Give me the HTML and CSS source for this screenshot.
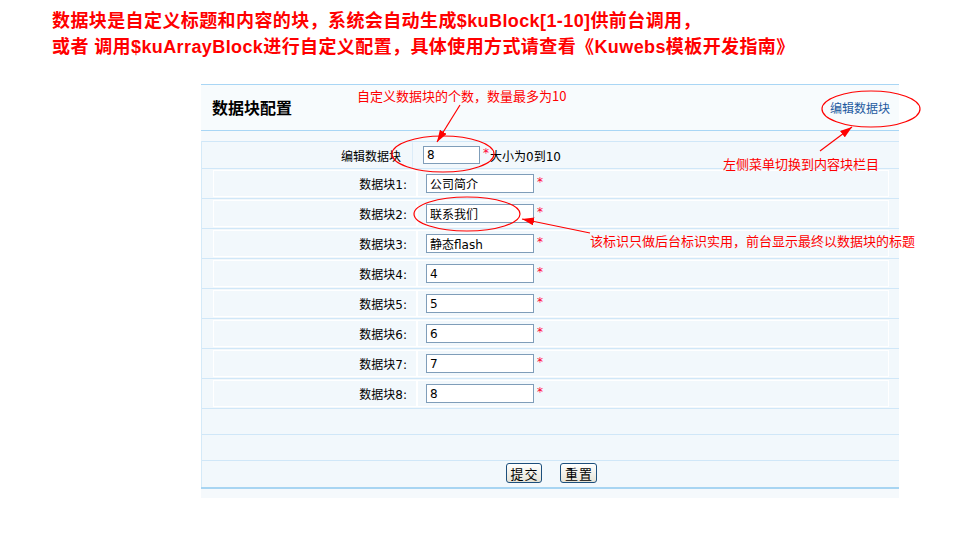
FILE: index.html
```html
<!DOCTYPE html>
<html lang="zh-CN">
<head>
    <meta charset="UTF-8">
    <meta name="viewport" content="width=device-width, initial-scale=1.0">
    <title>数据块配置</title>
    <link rel="stylesheet" href="styles.css">
</head>
<body>
    <div class="intro">
        <p>数据块是自定义标题和内容的块，系统会自动生成$kuBlock[1-10]供前台调用，</p>
        <p>或者 调用$kuArrayBlock进行自定义配置，具体使用方式请查看《Kuwebs模板开发指南》</p>
    </div>

    <form class="panel" onsubmit="return false">
        <div class="panel-head">
            <h2>数据块配置</h2>
            <a href="#" class="head-link">编辑数据块</a>
        </div>
        <div class="panel-gap"></div>

        <div class="panel-body">
            <div class="row row-count">
                <div class="cell label">编辑数据块</div>
                <div class="cell field"><input type="text" class="count" value="8"><span class="req">*</span>大小为0到10</div>
            </div>
            <div class="row">
                <div class="cell label">数据块1:</div>
                <div class="cell field"><input type="text" value="公司简介"><span class="req">*</span></div>
            </div>
            <div class="row">
                <div class="cell label">数据块2:</div>
                <div class="cell field"><input type="text" value="联系我们"><span class="req">*</span></div>
            </div>
            <div class="row">
                <div class="cell label">数据块3:</div>
                <div class="cell field"><input type="text" value="静态flash"><span class="req">*</span></div>
            </div>
            <div class="row">
                <div class="cell label">数据块4:</div>
                <div class="cell field"><input type="text" value="4"><span class="req">*</span></div>
            </div>
            <div class="row">
                <div class="cell label">数据块5:</div>
                <div class="cell field"><input type="text" value="5"><span class="req">*</span></div>
            </div>
            <div class="row">
                <div class="cell label">数据块6:</div>
                <div class="cell field"><input type="text" value="6"><span class="req">*</span></div>
            </div>
            <div class="row">
                <div class="cell label">数据块7:</div>
                <div class="cell field"><input type="text" value="7"><span class="req">*</span></div>
            </div>
            <div class="row">
                <div class="cell label">数据块8:</div>
                <div class="cell field"><input type="text" value="8"><span class="req">*</span></div>
            </div>
            <div class="row blank"></div>
            <div class="row blank"></div>
            <div class="row actions">
                <button type="submit">提交</button>
                <button type="reset" class="reset">重置</button>
            </div>
        </div>
        <div class="panel-foot"></div>
    </form>

    <!-- red notes drawn over the form -->
    <div class="notes">
        <svg width="960" height="547" viewBox="0 0 960 547">
            <defs>
                <marker id="tip" viewBox="0 0 12 8" refX="12" refY="4" markerWidth="12" markerHeight="8" markerUnits="userSpaceOnUse" orient="auto">
                    <path d="M0 0 L12 4 L0 8 Z" fill="#f00"/>
                </marker>
            </defs>
            <g fill="none" stroke="#f00" stroke-width="1.2">
                <ellipse cx="443" cy="154" rx="51" ry="18"/>
                <ellipse cx="871" cy="109" rx="49" ry="18"/>
                <ellipse cx="467" cy="214" rx="53" ry="17"/>
                <line x1="460" y1="105" x2="437" y2="142" marker-end="url(#tip)"/>
                <line x1="820" y1="151" x2="852" y2="127" marker-end="url(#tip)"/>
                <line x1="590" y1="233" x2="522" y2="219" marker-end="url(#tip)"/>
            </g>
        </svg>
        <span class="note note-count">自定义数据块的个数，数量最多为10</span>
        <span class="note note-menu">左侧菜单切换到内容块栏目</span>
        <span class="note note-title">该标识只做后台标识实用，前台显示最终以数据块的标题</span>
    </div>
</body>
</html>
```

FILE: styles.css
```css
body {
    margin: 0;
    position: relative;
    font-family: "DejaVu Sans", "Noto Sans CJK SC", sans-serif;
    font-size: 12px;
    color: #000;
    background-color: #fff;
}

.intro {
    height: 52px;
    padding: 8px 0 0 52px;
    color: #f00;
    font: bold 18px/26px "Liberation Sans", "Noto Sans CJK SC", sans-serif;
    letter-spacing: 0.4px;
}

.intro p {
    margin: 0;
}

.panel {
    width: 698px;
    margin: 24px 0 0 201px;
}

.panel-head {
    display: flex;
    justify-content: space-between;
    align-items: center;
    height: 45px;
    padding: 0 9px 0 11px;
    background-color: #f7fbfd;
    border-top: 1px solid #a9d6f5;
    border-bottom: 1px solid #a9d6f5;
}

.panel-head h2 {
    margin: 0 0 2px;
    font: bold 16px "Noto Sans CJK SC", sans-serif;
}

.head-link {
    color: #1e5aa0;
    text-decoration: none;
    font-family: "Noto Sans CJK SC", sans-serif;
}

.panel-gap {
    height: 10px;
    background-color: #f5f9fc;
}

.panel-body {
    border-left: 1px solid #d5eaf8;
    background-color: #f2f8fc;
}

.row {
    display: grid;
    grid-template-columns: 204px 1fr;
    padding: 1px 10px 1px 11px;
    border-top: 1px solid #d0e7f8;
}

.cell {
    display: flex;
    align-items: center;
    height: 27px;
    box-sizing: border-box;
    border: 1px solid #fff;
}

.label {
    justify-content: flex-end;
    padding-right: 9px;
}

.field {
    padding-left: 8px;
}

.field input {
    width: 108px;
    height: 19px;
    box-sizing: border-box;
    padding: 0 3px;
    border: 1px solid #7f9db9;
    font: 12px "DejaVu Sans", "Noto Sans CJK SC", sans-serif;
    color: #000;
    background-color: #fff;
}

.req {
    color: #f03;
    margin: 0 0 4px 3px;
}

/* first line: the count field has no white cell frames */
.row-count {
    grid-template-columns: 199px 1fr;
    padding: 0 10px 0 11px;
}

.row-count .cell {
    height: 26px;
    border-color: transparent;
}

.row-count .label {
    padding-right: 10px;
}

.row-count .field {
    border-left-color: #dcecf8;
    padding-left: 10px;
}

.row-count .req {
    margin-right: 1px;
}

.field input.count {
    width: 57px;
    height: 18px;
}

.blank {
    display: block;
    height: 25px;
    padding: 0;
}

.actions {
    display: flex;
    justify-content: center;
    align-items: flex-start;
    gap: 18px;
    height: 24px;
    padding: 2px 0 0 2px;
}

.actions button {
    width: 36px;
    height: 20px;
    padding: 0;
    border: 1px solid #1d4f7c;
    border-radius: 3px;
    background: linear-gradient(#fff, #e6e3d6);
    font: 13px "Noto Sans CJK SC", sans-serif;
    letter-spacing: 1px;
    text-indent: 1px;
    color: #000;
    cursor: pointer;
}

.actions button.reset {
    width: 37px;
}

.panel-foot {
    height: 9px;
    border-top: 2px solid #a8d5f2;
    background-color: #f5f9fc;
}

.notes {
    position: absolute;
    left: 0;
    top: 0;
    width: 960px;
    height: 547px;
    pointer-events: none;
}

.notes svg {
    display: block;
}

.note {
    position: absolute;
    color: #f00;
    font: 13px/16px "Noto Sans CJK SC", sans-serif;
    white-space: nowrap;
}

.note-count {
    left: 357px;
    top: 88px;
}

.note-menu {
    left: 723px;
    top: 156px;
}

.note-title {
    left: 590px;
    top: 233px;
}
```
